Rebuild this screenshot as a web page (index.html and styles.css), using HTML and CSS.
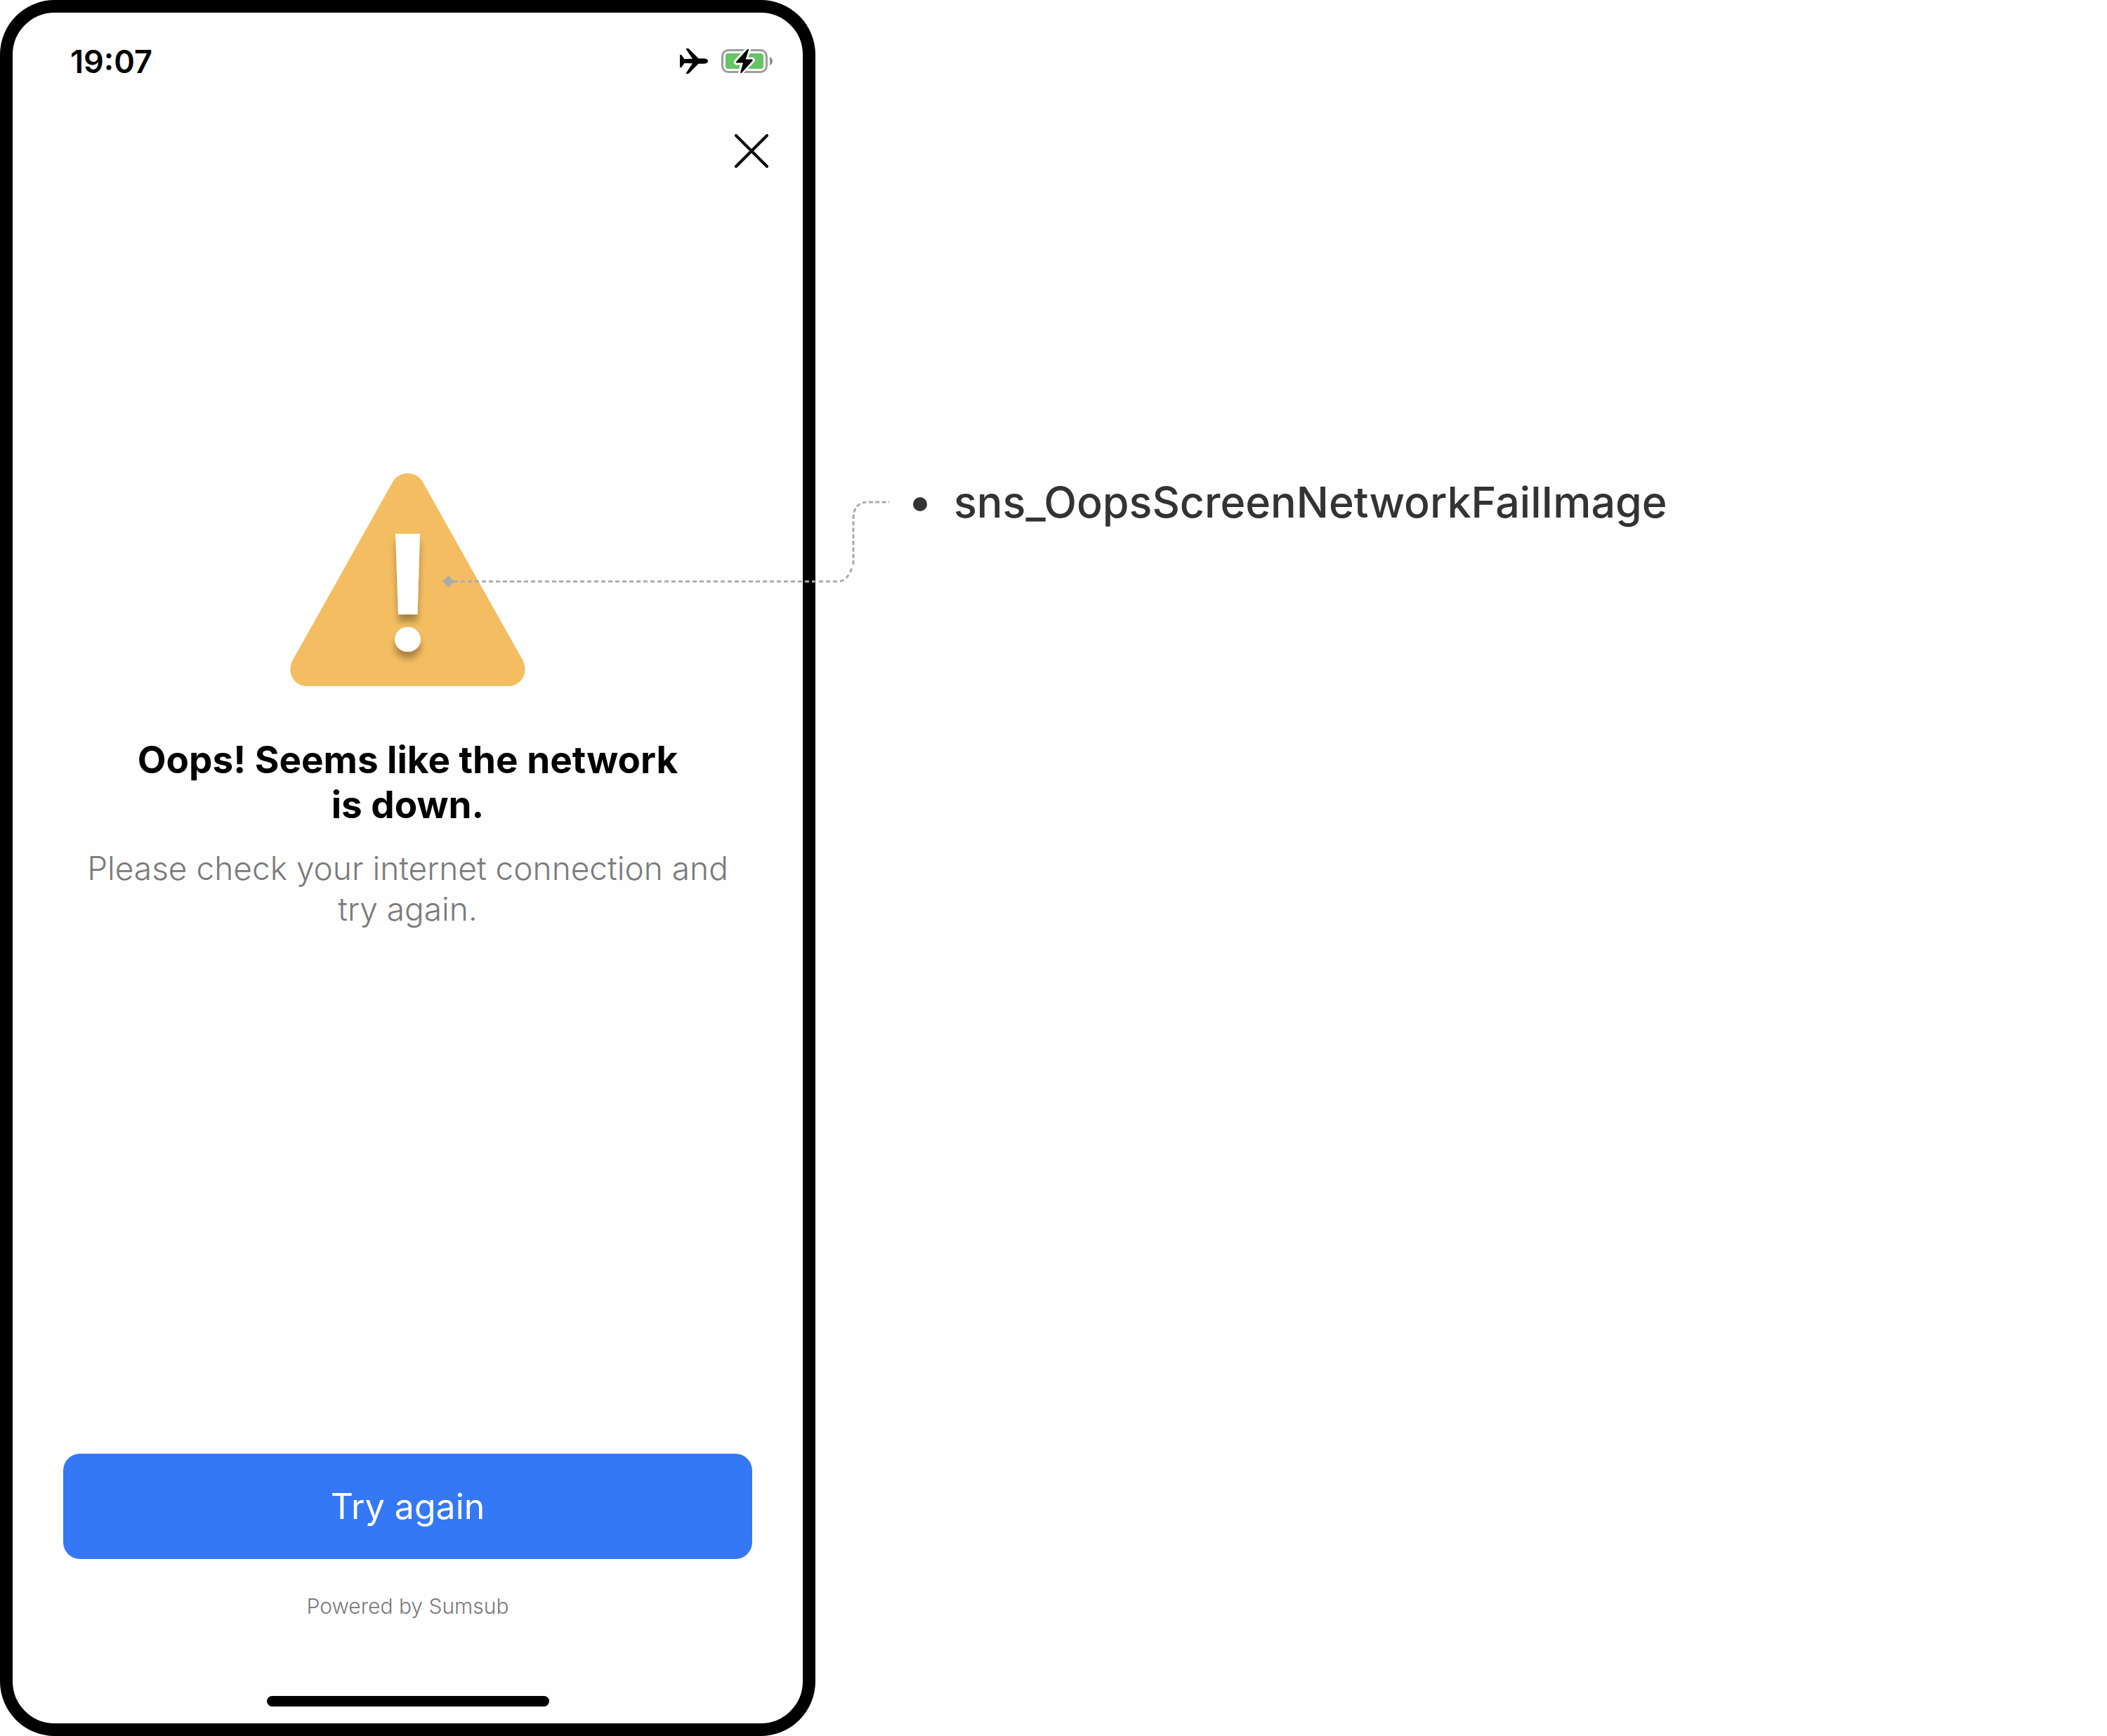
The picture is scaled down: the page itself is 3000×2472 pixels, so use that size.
FILE: index.html
```html
<!DOCTYPE html>
<html lang="en">
<head>
<meta charset="utf-8">
<meta name="viewport" content="width=device-width, initial-scale=1">
<title>Network failure screen</title>
<link rel="stylesheet" href="styles.css">
</head>
<body>
<div class="board">
  <section class="phone">
    <header class="status">
      <time class="clock">19:07</time>
      <div class="status-icons">
        <svg class="plane" viewBox="0 0 40 36" aria-hidden="true">
          <path d="M0 9.500Q0 9 .7 9H1.500Q2.300 9 2.800 9.700L6.300 15 18 14.700 9 1.300Q8.200 0 9.300 0H11.500Q12.600 0 13.400 .9L26.500 14.300H34.500Q40 14.800 40 18T34.500 21.700H26.500L13.400 35.100Q12.600 36 11.500 36H9.300Q8.200 36 9 34.700L18 21.300 6.300 21 2.800 26.300Q2.300 27 1.500 27H.7Q0 27 0 26.500Z"/>
        </svg>
        <svg class="battery" viewBox="0 0 73 38" aria-hidden="true">
          <rect x="1.500" y="3.500" width="63" height="31" rx="8.500" fill="none" stroke="#9d9d9d" stroke-width="3"/>
          <path d="M69 13Q73 15 73 19T69 25Z" fill="#8e8e8e"/>
          <rect x="6" y="8" width="54" height="22" rx="4" fill="#65c466"/>
          <path d="M37.500 1.500 21 20Q20.400 21.300 21.800 21.500H30.500L27 36.500 44.500 18.500Q45.300 17 43.800 16.700H34.500L39 2.500Z" fill="#fff" stroke="#fff" stroke-width="6" stroke-linejoin="round"/>
          <path d="M36.800 2.500Q39.500 .5 39 3.200L34.700 16.500H43.500Q45.700 16.800 44.300 18.700L29.300 35.500Q26.800 37.300 27.300 34.700L31 21.500H22.300Q20 21.200 21.400 19.500Z"/>
        </svg>
      </div>
    </header>
    <nav class="nav">
      <button class="close" type="button" aria-label="Close">
        <svg viewBox="0 0 48 48" aria-hidden="true"><path d="M2 2 46 46M46 2 2 46"/></svg>
      </button>
    </nav>
    <main class="message">
      <div class="figure">
        <svg class="warning" viewBox="0 0 335 303" aria-hidden="true">
          <defs>
            <filter id="drop" x="-100%" y="-20%" width="300%" height="150%">
              <feDropShadow dx="0" dy="10" stdDeviation="5" flood-color="#000" flood-opacity=".3"/>
            </filter>
          </defs>
          <path fill="#f4bd61" d="M146 12.500C150 5 158 0 167.500 0S185 5 189 12.500L331.500 266.500C340 283 330 303 311 303H24C5 303 -5 283 3.500 266.500Z"/>
          <g fill="#fff" filter="url(#drop)">
            <path d="M150 86H185L181.500 201H154Z"/>
            <rect x="149" y="219" width="37" height="35" rx="18" ry="17.500"/>
          </g>
        </svg>
        <svg class="connector" viewBox="0 0 640 130" aria-hidden="true">
          <path d="M0 121 8.500 112.500 17 121 8.500 129.500Z" fill="#ababab"/>
          <path d="M16 121H563Q577 121 584 99" stroke-dasharray="6 4"/>
          <path d="M585 97V32Q585 8 606 8H636" stroke-dasharray="6 3.300"/>
        </svg>
      </div>
      <h1 class="title">Oops! Seems like the network is&nbsp;down.</h1>
      <p class="text">Please check your internet connection and try again.</p>
    </main>
    <footer class="actions">
      <button class="retry" type="button">Try again</button>
      <small class="powered">Powered by Sumsub</small>
      <div class="home"></div>
    </footer>
  </section>
  <aside class="notes">
    <ul class="list">
      <li>sns_OopsScreenNetworkFailImage</li>
    </ul>
  </aside>
</div>
</body>
</html>
```
FILE: styles.css
```css
* {
  box-sizing: border-box;
}

body {
  margin: 0;
  background: #fefefe;
  color: #000;
  font-family: Inter, "Liberation Sans", sans-serif;
}

button {
  border: 0;
  padding: 0;
  font: inherit;
  cursor: pointer;
}

svg {
  display: block;
}

.board {
  display: flex;
  min-height: 100vh;
}

.phone {
  display: flex;
  flex: 0 0 38.7%;
  flex-direction: column;
  border: 18px solid #000;
  border-radius: 78px;
}

.status {
  display: flex;
  align-items: center;
  justify-content: space-between;
  height: 138px;
  padding: 0 43px 0 82px;
}

.clock {
  font-size: 45px;
  font-weight: 600;
}

.status-icons {
  display: flex;
  align-items: center;
  gap: 19px;
}

.plane {
  width: 40px;
  height: 36px;
}

.battery {
  width: 73px;
  height: 38px;
}

.nav {
  display: flex;
  align-items: center;
  justify-content: flex-end;
  height: 118px;
  padding: 0 49px;
}

.close {
  background: none;
}

.close svg {
  width: 48px;
  height: 48px;
  fill: none;
  stroke: #000;
  stroke-width: 4;
  stroke-linecap: round;
}

.message {
  display: flex;
  flex: 1;
  flex-direction: column;
  align-items: center;
  padding: 400px 72px 0;
  text-align: center;
}

.figure {
  position: relative;
}

.warning {
  width: 335px;
  height: 303px;
}

.connector {
  position: absolute;
  top: 33px;
  left: 217px;
  width: 640px;
  height: 130px;
  fill: none;
  stroke: #ababab;
  stroke-width: 3;
}

.connector path:first-child {
  stroke: none;
}

.title {
  max-width: 800px;
  margin: 73px 0 0;
  font-size: 53px;
  font-weight: 700;
  line-height: 64px;
}

.text {
  max-width: 940px;
  margin: 29px 0 0;
  color: #7b7b7b;
  font-size: 46px;
  font-weight: 300;
  line-height: 58px;
}

.actions {
  display: flex;
  flex-direction: column;
  align-items: center;
  padding: 0 72px 24px;
}

.retry {
  width: 100%;
  height: 150px;
  border-radius: 24px;
  background: #3478f6;
  color: #fff;
  font-size: 50px;
}

.powered {
  margin-top: 47px;
  color: #7b7b7b;
  font-size: 30px;
  font-weight: 300;
  line-height: 40px;
}

.home {
  width: 402px;
  height: 15px;
  margin-top: 108px;
  border-radius: 8px;
  background: #000;
}

.notes {
  flex: 1;
  padding: 675px 40px 0 139px;
}

.list {
  margin: 0;
  padding-left: 46px;
  color: #333;
  font-size: 61px;
  font-weight: 500;
  line-height: 80px;
}

.list li {
  padding-left: 12px;
}
```
